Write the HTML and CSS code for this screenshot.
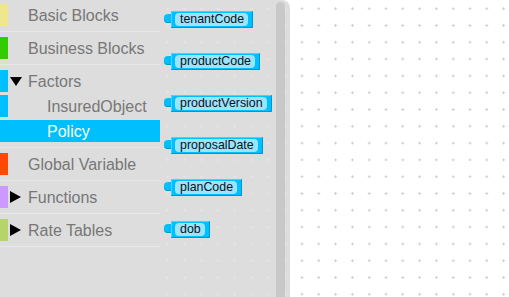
FILE: index.html
```
<!DOCTYPE html>
<html>
<head>
<meta charset="utf-8">
<link rel="stylesheet" href="styles.css">
</head>
<body>
<div class="app">
  <div class="toolbox">
    <div class="row"><span class="bar khaki"></span><span class="toggle"></span><span class="label">Basic Blocks</span></div>
    <div class="sep"></div>
    <div class="row"><span class="bar green"></span><span class="toggle"></span><span class="label">Business Blocks</span></div>
    <div class="sep"></div>
    <div class="row"><span class="bar cyan"></span><span class="toggle"><svg width="12" height="9" viewBox="0 0 12 9"><polygon points="0,0 12,0 6,9" fill="#000"/></svg></span><span class="label">Factors</span></div>
    <div class="row"><span class="bar cyan"></span><span class="toggle"></span><span class="label child">InsuredObject</span></div>
    <div class="row selected"><span class="bar cyan"></span><span class="toggle"></span><span class="label child">Policy</span></div>
    <div class="sep"></div>
    <div class="row"><span class="bar orange"></span><span class="toggle"></span><span class="label">Global Variable</span></div>
    <div class="sep"></div>
    <div class="row"><span class="bar purple"></span><span class="toggle"><svg width="11" height="12" viewBox="0 0 11 12"><polygon points="0,0 11,6 0,12" fill="#000"/></svg></span><span class="label">Functions</span></div>
    <div class="sep"></div>
    <div class="row"><span class="bar lime"></span><span class="toggle"><svg width="11" height="12" viewBox="0 0 11 12"><polygon points="0,0 11,6 0,12" fill="#000"/></svg></span><span class="label">Rate Tables</span></div>
    <div class="sep"></div>
  </div>
  <div class="workspace">
    <svg class="canvas" width="100%" height="100%">
      <defs>
        <pattern id="grid" x="-0.8" y="0.3" width="16.8" height="16.8" patternUnits="userSpaceOnUse">
          <rect x="7.1" y="7.9" width="2.6" height="1" fill="#c8c8c8"/>
          <rect x="7.9" y="7.1" width="1" height="2.6" fill="#c8c8c8"/>
        </pattern>
        <pattern id="gridlight" x="-0.8" y="0.3" width="16.8" height="16.8" patternUnits="userSpaceOnUse">
          <rect x="7.1" y="7.9" width="2.6" height="1" fill="#e6e6e6"/>
          <rect x="7.9" y="7.1" width="1" height="2.6" fill="#e6e6e6"/>
        </pattern>
      </defs>
      <rect width="100%" height="100%" fill="#fff"/>
      <rect width="100%" height="100%" fill="url(#grid)"/>
      <rect x="-10" y="0" width="140" height="320" rx="8" fill="#dddddd"/>
      <rect x="-10" y="0" width="140" height="320" rx="8" fill="url(#gridlight)"/>
    </svg>
    <div class="flyout">
      <div class="block"><span class="tab"></span><span class="body"><span class="field">tenantCode</span></span></div>
      <div class="block"><span class="tab"></span><span class="body"><span class="field">productCode</span></span></div>
      <div class="block"><span class="tab"></span><span class="body"><span class="field">productVersion</span></span></div>
      <div class="block"><span class="tab"></span><span class="body"><span class="field">proposalDate</span></span></div>
      <div class="block"><span class="tab"></span><span class="body"><span class="field">planCode</span></span></div>
      <div class="block"><span class="tab"></span><span class="body"><span class="field">dob</span></span></div>
      <div class="scrollbar"></div>
    </div>
  </div>
</div>
</body>
</html>
```
FILE: styles.css
```
html, body {
  margin: 0;
  padding: 0;
  width: 509px;
  height: 297px;
  overflow: hidden;
}
.app {
  display: flex;
  height: 297px;
}
.toolbox {
  width: 160px;
  flex: none;
  background: #dddddd;
  padding-top: 4px;
  font-family: "Liberation Sans", Arial, sans-serif;
  font-size: 16px;
  color: #777777;
}
.row {
  height: 22px;
  display: flex;
  align-items: center;
  margin-bottom: 3px;
}
.bar {
  width: 8px;
  align-self: stretch;
}
.khaki { background: #f0e68c; }
.green { background: #33cc00; }
.cyan { background: #00bfff; }
.orange { background: #ff4800; }
.purple { background: #cc99ff; }
.lime { background: #b5d46a; }
.toggle {
  width: 20px;
  display: flex;
  align-items: center;
  padding-left: 2px;
  box-sizing: border-box;
}
.toggle svg { display: block; }
.label {
  line-height: 22px;
  padding-top: 1px;
  white-space: nowrap;
}
.label.child {
  padding-left: 19px;
}
.row.selected {
  background: #00bfff;
  color: #ffffff;
}
.sep {
  border-bottom: 1px solid #e8e8e8;
  margin: 5px 0;
}
.workspace {
  flex: 1;
  position: relative;
  overflow: hidden;
}
.canvas {
  position: absolute;
  left: 0;
  top: 0;
}
.flyout {
  position: absolute;
  left: 0;
  top: 0;
  width: 130px;
  height: 297px;
  box-sizing: border-box;
  padding: 11px 0 0 4px;
  display: flex;
  flex-direction: column;
  align-items: flex-start;
  gap: 25px;
}
.block {
  display: flex;
  align-items: flex-start;
}
.tab {
  width: 7px;
  height: 9px;
  margin-top: 3px;
  background: #00bfff;
  border-radius: 4px 0 0 4px;
  box-shadow: inset 0 -1px 0 #0099cc;
}
.body {
  display: flex;
  background: #00bfff;
  padding: 2px 5px 2px 4px;
  border-radius: 1px;
  box-shadow: inset -1px -1px 0 #0099cc, inset 1px 1px 0 #4dd2ff;
}
.field {
  display: block;
  background: #99e5ff;
  border-radius: 4px;
  padding: 0 4px 0 5px;
  height: 13px;
  line-height: 13px;
  font-family: "Liberation Sans", Arial, sans-serif;
  font-size: 12.4px;
  color: #111;
}
.scrollbar {
  position: absolute;
  left: 116px;
  top: 2px;
  width: 9px;
  height: 310px;
  border-radius: 4.5px;
  background: #c8c8c8;
}
```
